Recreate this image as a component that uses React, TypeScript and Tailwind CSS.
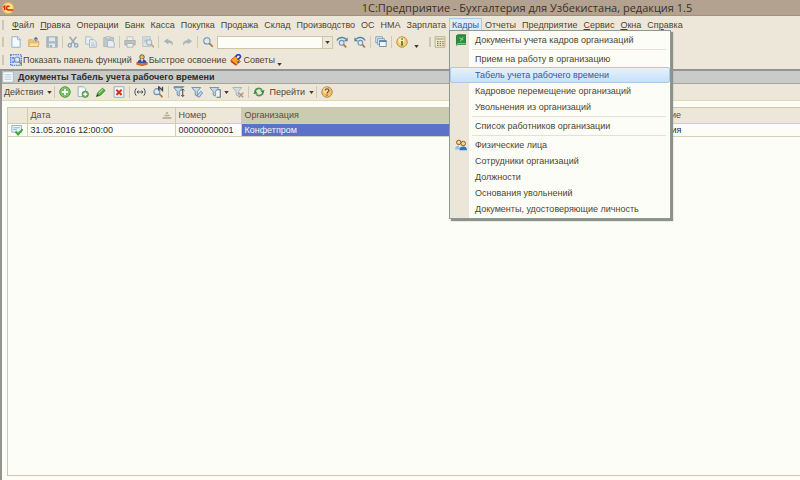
import type { ReactNode } from "react";

type IconProps = { children: ReactNode; faded?: boolean };

function Icon({ children, faded }: IconProps) {
  return (
    <svg viewBox="0 0 16 16" aria-hidden="true" className={faded ? "size-3 shrink-0 opacity-60" : "size-3 shrink-0"} fill="none">
      {children}
    </svg>
  );
}

const Page = () => <path d="M2.5 1h8l3 3v11h-11z" fill="#f4f9fd" stroke="#8ba9c4" strokeWidth="1.2" />;
const Lens = ({ x = 6.5, y = 6.5, r = 4.2 }: { x?: number; y?: number; r?: number }) => (
  <>
    <path d={`M${x + r * 0.7} ${y + r * 0.7}l${r} ${r}`} stroke="#b5793d" strokeWidth="2.4" strokeLinecap="round" />
    <circle cx={x} cy={y} r={r} fill="#d9ebf8" stroke="#7391ac" strokeWidth="1.4" />
  </>
);
const Funnel = () => (
  <path d="M1 2h12l-4.600 5.500v6L5.600 12V7.500z" fill="#c3d9ea" stroke="#6f8ba5" strokeWidth="1.200" />
);

const NewIcon = () => <Icon><Page /><path d="M10 1v4h4" stroke="#8ba9c4" /></Icon>;
const OpenIcon = () => (
  <Icon>
    <path d="M1 5h5l1.500 1.500H14V14H1z" fill="#f2c873" stroke="#cf9c4d" />
    <path d="M2 9h13l-1.500 5H1z" fill="#fbe1a2" stroke="#d6a85c" />
    <path d="M10.500 7V2M8 4.500L10.500 2 13 4.500" stroke="#5c7896" strokeWidth="1.600" />
  </Icon>
);
const SaveIcon = () => (
  <Icon faded>
    <path d="M1 1h14v14H1z" fill="#7f9cb6" stroke="#5f7f9b" />
    <path d="M4 2h8v5H4zM4 10h8v5H4z" fill="#dfe8ee" />
    <path d="M5 12h3v3H5z" fill="#688ba8" />
  </Icon>
);
const CutIcon = () => (
  <Icon faded>
    <path d="M3.500 1L11 11M12.500 1L5 11" stroke="#5f7d99" strokeWidth="1.800" />
    <circle cx="3.700" cy="12.500" r="2.200" stroke="#3f78b4" strokeWidth="1.700" />
    <circle cx="12.300" cy="12.500" r="2.200" stroke="#3f78b4" strokeWidth="1.700" />
  </Icon>
);
const CopyIcon = () => (
  <Icon faded>
    <path d="M1 1h6l2 2v8H1z" fill="#eaf3fa" stroke="#6890b4" />
    <path d="M6 5h6l3 3v7H6z" fill="#eaf3fa" stroke="#5584ad" />
    <path d="M8 9h4M8 11h5M8 13h5" stroke="#7ba1c2" />
  </Icon>
);
const PasteIcon = () => (
  <Icon faded>
    <path d="M1 2h13v12H1z" fill="#a5b4bc" stroke="#768a98" />
    <path d="M4 1h6v3H4z" fill="#d6dce0" stroke="#768a98" />
    <path d="M6 6h6l3 3v6H6z" fill="#e8f2f9" stroke="#5c89b0" />
  </Icon>
);
const PrintIcon = () => (
  <Icon faded>
    <path d="M4 6V1h8v5" fill="#eef3f6" stroke="#8398a8" />
    <path d="M1 6h14v6H1z" fill="#9aa9b3" stroke="#71818c" />
    <path d="M4 10h8v5H4z" fill="#eef3f6" stroke="#71818c" />
    <path d="M11 8h2" stroke="#e7ba5c" strokeWidth="1.500" />
  </Icon>
);
const PreviewIcon = () => (
  <Icon faded>
    <path d="M1 1h10v13H1z" fill="#d6e3ed" stroke="#7b99b2" />
    <path d="M3 4h5M3 6h3M3 8h3" stroke="#7b99b2" />
    <Lens x={9.500} y={8.500} r={3.500} />
  </Icon>
);
const UndoIcon = () => (
  <Icon faded>
    <path d="M1 7l6-4v2.500c5 0 7 3 6 7.500-1-3-3-4-6-4V11z" fill="#7f949f" />
  </Icon>
);
const RedoIcon = () => (
  <Icon faded>
    <path d="M15 7L9 3v2.500c-5 0-7 3-6 7.500 1-3 3-4 6-4V11z" fill="#7f949f" />
  </Icon>
);
const FindIcon = () => <Icon><Lens /></Icon>;
const FindNextIcon = () => (
  <Icon>
    <Lens x={7.500} y={9} r={3.200} />
    <path d="M1 6C4 1 10 1 13 4" stroke="#4f83a5" strokeWidth="1.800" />
    <path d="M15.500 1.500V7h-5z" fill="#4f83a5" />
  </Icon>
);
const FindPrevIcon = () => (
  <Icon>
    <Lens x={8.500} y={9} r={3.200} />
    <path d="M15 6C12 1 6 1 3 4" stroke="#4f83a5" strokeWidth="1.800" />
    <path d="M0.500 1.500V7h5z" fill="#4f83a5" />
  </Icon>
);
const WindowsIcon = () => (
  <Icon>
    <path d="M1 1h9v8H1z" fill="#dceaf4" stroke="#6b8fae" />
    <path d="M3.500 3.500h9v8h-9z" fill="#dceaf4" stroke="#6b8fae" />
    <path d="M6 6h9v8H6z" fill="#eff6fb" stroke="#55799a" />
    <path d="M6 7h9" stroke="#55799a" strokeWidth="1.800" />
  </Icon>
);
const InfoIcon = () => (
  <Icon>
    <circle cx="8" cy="8" r="7" fill="#f8cd6c" stroke="#b98c4d" strokeWidth="1.300" />
    <circle cx="7" cy="6" r="4" fill="#fdeab5" />
    <path d="M8 3v2M8 6.500V13" stroke="#3f7a32" strokeWidth="2.200" />
  </Icon>
);
const CalcIcon = () => (
  <Icon>
    <path d="M1.500 1h13v14h-13z" fill="#f3ebc8" stroke="#a39c7c" />
    <path d="M3 3h10v2H3z" fill="#9dbd8a" />
    <path d="M4 7.500h2M4 10h2M4 12.500h2" stroke="#618c56" strokeWidth="1.400" />
    <path d="M7.500 7.500h2M7.500 10h2M7.500 12.500h2" stroke="#73849b" strokeWidth="1.400" />
    <path d="M11 7.500h2M11 10h2M11 12.500h2" stroke="#d96a3a" strokeWidth="1.400" />
  </Icon>
);
const PanelIcon = () => (
  <Icon>
    <path d="M1 1h14v14H1z" fill="#d9e8fb" stroke="#2f67cf" strokeWidth="1.600" strokeDasharray="2 1" />
    <path d="M3 4h3v3H3zM3 9h3v3H3z" fill="#5a8ce0" />
    <Lens x={9.500} y={7.500} r={3.500} />
  </Icon>
);
const LearnIcon = () => (
  <Icon>
    <circle cx="8" cy="4" r="3" fill="#f2c067" stroke="#473724" />
    <path d="M2 12c0-3 2-5 6-5s6 2 6 5z" fill="#254fa8" />
    <path d="M6.500 7h3L8 11z" fill="#fff" />
    <path d="M1 11l7 2 7-2v3l-7 1.500L1 14z" fill="#e0722a" stroke="#a8451c" strokeWidth=".7" />
  </Icon>
);
const AdviceIcon = () => (
  <Icon>
    <path d="M1 8l6-5 7 7-6 5z" fill="#f6a623" stroke="#c0492a" />
    <path d="M1 8l7 5v2.500L1 10.500z" fill="#d23b22" />
    <path d="M8 4c0-4 6-4 6-.5C14 5.500 11 5.500 11 8M11 9.500v2" stroke="#2b35c9" strokeWidth="2.200" />
  </Icon>
);
const AddIcon = () => (
  <Icon>
    <circle cx="8" cy="8" r="7" fill="#63b84e" stroke="#4a8f43" strokeWidth="1.300" />
    <circle cx="8" cy="8" r="5.500" stroke="#b6e2a6" strokeWidth=".8" />
    <path d="M8 4v8M4 8h8" stroke="#fff" strokeWidth="2.400" />
  </Icon>
);
const AddCopyIcon = () => (
  <Icon>
    <path d="M1.500 1h7l3 3v10h-10z" fill="#f4f9fd" stroke="#8ba9c4" strokeWidth="1.200" />
    <circle cx="11" cy="11" r="4.300" fill="#62b34e" stroke="#4a8f43" />
    <path d="M11 8.500v5M8.500 11h5" stroke="#fff" strokeWidth="1.700" />
  </Icon>
);
const EditIcon = () => (
  <Icon>
    <path d="M2 14l1.500-5L10 3 13.500 6 7 12.500z" fill="#4fb13c" stroke="#27782b" />
    <path d="M5 9.500L10.500 4.500" stroke="#b1e493" strokeWidth="1.400" />
    <path d="M2 14l1-3L5 13z" fill="#3e3428" />
  </Icon>
);
const DeleteIcon = () => (
  <Icon>
    <path d="M1.500 1h13v14h-13z" fill="#f7fafd" stroke="#89a5be" strokeWidth="1.200" />
    <path d="M4.500 5l7 7M11.500 5l-7 7" stroke="#d3301c" strokeWidth="2.600" />
  </Icon>
);
const IntervalIcon = () => (
  <Icon>
    <path d="M3 3C.5 6 .5 10 3 13M13 3c2.500 3 2.500 7 0 10" stroke="#45505a" strokeWidth="1.300" />
    <path d="M4 8h8M6 6L4 8l2 2M10 6l2 2-2 2" stroke="#45505a" strokeWidth="1.300" />
  </Icon>
);
const FindByIcon = () => (
  <Icon>
    <Lens x={6.500} y={7.500} r={4} />
    <path d="M9 6V1l5 5V1" stroke="#3d4349" strokeWidth="1.700" />
  </Icon>
);
const FilterSortIcon = () => (
  <Icon>
    <path d="M1 1h14" stroke="#6f8ba5" strokeWidth="1.600" />
    <Funnel />
    <path d="M13 4v10M11 6l2-2 2 2M11 12l2 2 2-2" stroke="#3a444d" strokeWidth="1.300" />
  </Icon>
);
const FilterValueIcon = () => (
  <Icon>
    <Funnel />
    <path d="M8 13l5-6 2.500 2L11 15z" fill="#b6d9f4" stroke="#4b7eae" />
  </Icon>
);
const FilterHistoryIcon = () => (
  <Icon>
    <Funnel />
    <path d="M11 5h4v10h-5" stroke="#55718c" strokeWidth="1.400" fill="#f2f6f9" />
  </Icon>
);
const FilterOffIcon = () => (
  <Icon faded>
    <Funnel />
    <path d="M9 9l6 6M15 9l-6 6" stroke="#8f5d4b" strokeWidth="1.900" />
  </Icon>
);
const RefreshIcon = () => (
  <Icon>
    <path d="M2.500 8C3 3 9 2 12 5M13.500 8C13 13 7 14 4 11" stroke="#4c9750" strokeWidth="2.200" />
    <path d="M15.500 5.500L13 10 9.500 6zM.5 10.500L3 6l3.500 4z" fill="#397f42" />
  </Icon>
);
const HelpIcon = () => (
  <Icon>
    <circle cx="8" cy="8" r="7" fill="#f6bf66" stroke="#b98450" strokeWidth="1.300" />
    <circle cx="7" cy="6" r="4" fill="#fce0a2" />
    <path d="M5.500 6c0-3 5-3 5 0C10.500 8 8 7.500 8 10M8 11.300v1.700" stroke="#6a5138" strokeWidth="1.600" />
  </Icon>
);
const BookIcon = () => (
  <Icon>
    <path d="M2 2l2-1h10v13H4l-2 1z" fill="#2c8d3e" stroke="#1b6a2d" />
    <path d="M2 14.500L4 13h10" stroke="#d7e9d0" />
    <path d="M6 5l5 3M11 4l-4 6" stroke="#7fd07e" strokeWidth="1.500" />
  </Icon>
);
const PeopleIcon = () => (
  <Icon>
    <circle cx="5" cy="4.500" r="3" fill="#f6cf94" stroke="#8a5a26" strokeWidth="1.300" />
    <circle cx="11" cy="6" r="3" fill="#f6cf94" stroke="#8a5a26" strokeWidth="1.300" />
    <path d="M0 14c0-4 2-5 5-5l3 5z" fill="#8ec3ec" />
    <path d="M6 15c0-4 2-5 5-5s5 1 5 5z" fill="#2b78bd" />
  </Icon>
);
const ListIcon = () => (
  <Icon>
    <path d="M1 1h14v14H1z" fill="#f6fafc" stroke="#8eb0cc" />
    <path d="M3.500 5h9M3.500 8h9M3.500 11h9" stroke="#9db7c9" />
  </Icon>
);
const PostedIcon = () => (
  <Icon>
    <path d="M1 2h13v9H1z" fill="#e6f1f8" stroke="#82a5bf" />
    <path d="M3 5h9M3 7.500h5" stroke="#82a5bf" />
    <path d="M6 10l3.500 4L15.500 7" stroke="#3fa63b" strokeWidth="2.600" />
  </Icon>
);
const LogoIcon = () => (
  <svg viewBox="0 0 16 16" aria-hidden="true" className="size-3 shrink-0" fill="none">
    <circle cx="8" cy="8" r="7.500" fill="#fbe27c" stroke="#e9a54a" />
    <path d="M1.500 7l2-1.500V11" stroke="#d42a1c" strokeWidth="2" />
    <path d="M10 6.200C8.500 4.800 6 5.800 6 8s1.500 2.500 3 2.500h6" stroke="#d42a1c" strokeWidth="2" />
  </svg>
);

const Caret = () => (
  <svg viewBox="0 0 6 4" aria-hidden="true" className="h-[3px] w-[5px] shrink-0">
    <path d="M0 0h6L3 4z" fill="#4a3822" />
  </svg>
);
const Sep = () => <span className="mx-px h-3 w-px shrink-0 bg-[#cfc9b4]" />;
const Grip = () => <span className="h-2.5 w-0.5 shrink-0 bg-[#cfc8b0]" />;

function Tool({ label, children }: { label: string; children: ReactNode }) {
  return (
    <button type="button" aria-label={label} className="flex h-4 w-[18px] shrink-0 items-center justify-center">
      {children}
    </button>
  );
}

const More = () => (
  <button type="button" aria-label="Настройка панели" className="flex h-4 w-2.5 shrink-0 items-end justify-center pb-0.5">
    <Caret />
  </button>
);

type MenuEntry = { label: string; hot?: number; open?: boolean };
const menu: MenuEntry[] = [
  { label: "Файл", hot: 0 },
  { label: "Правка", hot: 0 },
  { label: "Операции" },
  { label: "Банк" },
  { label: "Касса" },
  { label: "Покупка" },
  { label: "Продажа" },
  { label: "Склад" },
  { label: "Производство" },
  { label: "ОС" },
  { label: "НМА" },
  { label: "Зарплата" },
  { label: "Кадры", open: true },
  { label: "Отчеты" },
  { label: "Предприятие" },
  { label: "Сервис", hot: 0 },
  { label: "Окна", hot: 0 },
  { label: "Справка", hot: 2 },
];

type Item = { label: string; icon?: ReactNode; active?: boolean };
const groups: Item[][] = [
  [{ label: "Документы учета кадров организаций", icon: <BookIcon /> }],
  [
    { label: "Прием на работу в организацию" },
    { label: "Табель учета рабочего времени", active: true },
    { label: "Кадровое перемещение организаций" },
    { label: "Увольнения из организаций" },
  ],
  [{ label: "Список работников организации" }],
  [
    { label: "Физические лица", icon: <PeopleIcon /> },
    { label: "Сотрудники организаций" },
    { label: "Должности" },
    { label: "Основания увольнений" },
    { label: "Документы, удостоверяющие личность" },
  ],
];

function MenuLabel({ label, hot }: { label: string; hot?: number }) {
  if (hot === undefined) return <>{label}</>;
  return (
    <>
      {label.slice(0, hot)}
      <u>{label[hot]}</u>
      {label.slice(hot + 1)}
    </>
  );
}

function Dropdown() {
  return (
    <div
      role="menu"
      className="absolute top-full left-0 z-10 -mt-px w-[222px] border border-[#8b9a92] bg-[#fdfdf8] bg-linear-to-r from-[#ece6d9] from-[19px] to-[#fdfdf8] to-[19px] py-px text-[#4f452f] shadow-[2px_2px_1px_#8c928b]"
    >
      {groups.map((items, g) => (
        <div key={g}>
          {g > 0 && <div className="my-px mr-1 ml-[22px] h-px bg-[#e8e1cf]" />}
          {items.map((item) => (
            <button
              key={item.label}
              type="button"
              role="menuitem"
              className={`flex h-4 w-full items-center border pl-1 text-left whitespace-nowrap ${
                item.active
                  ? "rounded-xs border-[#a9c9e8] bg-linear-to-b from-[#e6f2fd] to-[#c6e0fa] text-[#3d55a0]"
                  : "border-transparent"
              }`}
            >
              <span className="w-5 shrink-0">{item.icon}</span>
              {item.label}
            </button>
          ))}
        </div>
      ))}
    </div>
  );
}

export default function App() {
  return (
    <div className="flex h-screen flex-col overflow-hidden bg-[#ede7da] font-['Liberation_Sans',Arial,sans-serif] text-[9px] leading-3 text-[#4f452f]">
      <header className="flex h-4 shrink-0 items-center border-b border-[#a58f75] bg-[#b3a28f] pl-0.5">
        <LogoIcon />
        <h1 className="flex-1 pl-60 text-center font-['Open_Sans','Noto_Sans',sans-serif] text-[11px] leading-4 text-[#3a3028]">
          1С:Предприятие - Бухгалтерия для Узбекистана, редакция 1.5
        </h1>
      </header>

      <nav className="flex h-[17px] shrink-0 items-center pl-0.5">
        <Grip />
        <div className="flex pl-[5px]">
          {menu.map((m) => (
            <div key={m.label} className="relative">
              <button
                type="button"
                className={`flex h-[13px] items-center border px-0.5 whitespace-nowrap ${
                  m.open ? "border-[#a9c9e8] bg-[#dcecfb] text-[#3d55a0]" : "border-transparent"
                }`}
              >
                <span>
                  <MenuLabel label={m.label} hot={m.hot} />
                </span>
              </button>
              {m.open && <Dropdown />}
            </div>
          ))}
        </div>
      </nav>

      <div className="flex h-[18px] shrink-0 items-center pl-0.5">
        <Grip />
        <div className="flex items-center pl-[3px]">
          <Tool label="Новый"><NewIcon /></Tool>
          <Tool label="Открыть"><OpenIcon /></Tool>
          <Tool label="Сохранить"><SaveIcon /></Tool>
          <Sep />
          <Tool label="Вырезать"><CutIcon /></Tool>
          <Tool label="Копировать"><CopyIcon /></Tool>
          <Tool label="Вставить"><PasteIcon /></Tool>
          <Sep />
          <Tool label="Печать"><PrintIcon /></Tool>
          <Tool label="Просмотр"><PreviewIcon /></Tool>
          <Sep />
          <Tool label="Отменить"><UndoIcon /></Tool>
          <Tool label="Повторить"><RedoIcon /></Tool>
          <Sep />
          <Tool label="Найти"><FindIcon /></Tool>
        </div>
        <div className="flex h-[13px] w-[116px] border border-[#cdc5a5] bg-[#fdfdf8]">
          <input aria-label="Поиск" className="min-w-0 flex-1 px-1 outline-none" />
          <button type="button" aria-label="Показать историю" className="flex w-2.5 items-center justify-center border-l border-[#cdc5a5] bg-[#ede7da]">
            <Caret />
          </button>
        </div>
        <Tool label="Найти далее"><FindNextIcon /></Tool>
        <Tool label="Найти назад"><FindPrevIcon /></Tool>
        <Sep />
        <Tool label="Окна"><WindowsIcon /></Tool>
        <Sep />
        <Tool label="Справка"><InfoIcon /></Tool>
        <More />
        <div className="flex items-center pl-2">
          <Grip />
          <Tool label="Калькулятор"><CalcIcon /></Tool>
        </div>
      </div>

      <div className="flex h-[18px] shrink-0 items-center pl-0.5">
        <Grip />
        <div className="flex items-center gap-1 pl-1.5">
          <button type="button" className="flex items-center gap-px whitespace-nowrap"><PanelIcon />Показать панель функций</button>
          <button type="button" className="flex items-center gap-px whitespace-nowrap"><LearnIcon />Быстрое освоение</button>
          <button type="button" className="flex items-center gap-px whitespace-nowrap"><AdviceIcon />Советы</button>
        </div>
        <More />
      </div>

      <main className="flex min-h-0 flex-1 flex-col border-t-2 border-l-2 border-[#959390] bg-[#fdfdf8]">
        <h2 className="flex h-[13px] shrink-0 items-center gap-1 border-b border-[#a8a591] bg-[#c9cbca] font-bold text-[#2e2b26]">
          <ListIcon />
          Документы Табель учета рабочего времени
        </h2>
        <div className="flex h-[17px] shrink-0 items-center border-b border-[#e0d9b4] bg-[#ede7da] pl-0.5">
          <button type="button" className="flex items-center gap-1 pr-px">Действия<Caret /></button>
          <Sep />
          <Tool label="Добавить"><AddIcon /></Tool>
          <Tool label="Добавить копированием"><AddCopyIcon /></Tool>
          <Tool label="Изменить"><EditIcon /></Tool>
          <Tool label="Пометить на удаление"><DeleteIcon /></Tool>
          <Sep />
          <Tool label="Интервал дат"><IntervalIcon /></Tool>
          <Tool label="Найти по номеру"><FindByIcon /></Tool>
          <Sep />
          <Tool label="Отбор и сортировка"><FilterSortIcon /></Tool>
          <Tool label="Отбор по значению"><FilterValueIcon /></Tool>
          <Tool label="История отборов"><FilterHistoryIcon /></Tool>
          <Caret />
          <Tool label="Отключить отбор"><FilterOffIcon /></Tool>
          <Sep />
          <Tool label="Обновить"><RefreshIcon /></Tool>
          <button type="button" className="flex items-center gap-1 px-px">Перейти<Caret /></button>
          <Sep />
          <Tool label="Помощь"><HelpIcon /></Tool>
        </div>

        <div className="mt-1.5 mb-1 ml-[5px] min-h-0 flex-1 overflow-hidden border-t border-b border-l border-[#cdc8ae]">
          <table className="w-full table-fixed border-collapse text-left">
            <colgroup>
              <col className="w-[19px]" />
              <col className="w-[148px]" />
              <col className="w-[66px]" />
              <col className="w-[395px]" />
              <col />
            </colgroup>
            <thead>
              <tr className="h-[15px] border-b border-[#d8cfa8] bg-[#ede7da] text-[#5a4f38]">
                <th scope="col" aria-label="Состояние" className="border-r border-[#d3cba8]" />
                <th scope="col" className="border-r border-[#d3cba8] px-[3px] font-normal">
                  <span className="flex items-center justify-between">
                    Дата
                    <svg viewBox="0 0 10 7" aria-hidden="true" className="h-[7px] w-2.5">
                      <path d="M4 1h2M2.500 3.500h5M.5 6h9" stroke="#b3a985" strokeWidth="1.300" />
                    </svg>
                  </span>
                </th>
                <th scope="col" className="border-r border-[#d3cba8] px-[3px] font-normal">Номер</th>
                <th scope="col" className="border-r border-[#d3cba8] bg-[#cbcbb2] px-[3px] font-normal">Организация</th>
                <th scope="col" className="px-[3px] font-normal">Описание</th>
              </tr>
            </thead>
            <tbody>
              <tr className="h-[13px] border-b border-[#d8cfb8] text-[#2e2c2a]">
                <td className="border-r border-[#d8cfb8]"><span className="flex justify-center"><PostedIcon /></span></td>
                <td className="border-r border-[#d8cfb8] px-[3px]">31.05.2016 12:00:00</td>
                <td className="border-r border-[#d8cfb8] px-[3px]">00000000001</td>
                <td className="border-r border-[#d8cfb8] bg-[#5b72c8] px-[3px] text-[#f4f5fb]">Конфетпром</td>
                <td className="px-[3px]">Операция</td>
              </tr>
            </tbody>
          </table>
        </div>
      </main>
    </div>
  );
}
